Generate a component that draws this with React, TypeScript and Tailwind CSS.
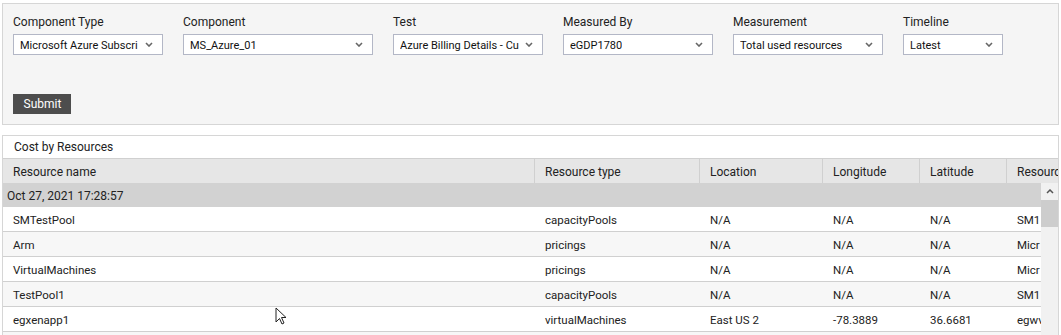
import React from "react";

const Chevron = () => (
  <svg width="8" height="5" viewBox="0 0 8 5" className="shrink-0">
    <polyline points="1,1 4,4 7,1" fill="none" stroke="#666" strokeWidth="1.6" />
  </svg>
);

const fields = [
  { label: "Component Type", value: "Microsoft Azure Subscri", w: "w-[150px]" },
  { label: "Component", value: "MS_Azure_01", w: "w-[190px]" },
  { label: "Test", value: "Azure Billing Details - Cu", w: "w-[150px]" },
  { label: "Measured By", value: "eGDP1780", w: "w-[150px]" },
  { label: "Measurement", value: "Total used resources", w: "w-[150px]" },
  { label: "Timeline", value: "Latest", w: "w-[100px]" },
];

const rows = [
  ["SMTestPool", "capacityPools", "N/A", "N/A", "N/A", "SM1"],
  ["Arm", "pricings", "N/A", "N/A", "N/A", "Micr"],
  ["VirtualMachines", "pricings", "N/A", "N/A", "N/A", "Micr"],
  ["TestPool1", "capacityPools", "N/A", "N/A", "N/A", "SM1"],
  ["egxenapp1", "virtualMachines", "East US 2", "-78.3889", "36.6681", "egwv"],
  ["", "", "", "", "", ""],
];

const headers = ["Resource name", "Resource type", "Location", "Longitude", "Latitude", "Resource"];

export default function App() {
  return (
    <div className="relative w-[1061px] h-[335px] overflow-hidden bg-white font-['Roboto',sans-serif] text-[12px] text-[#222]">
      {/* Filter panel */}
      <div className="mx-[2px] mt-[3px] h-[122px] border border-[#d6d6d6] bg-[#f5f5f5] px-[10px] pt-[10px]">
        <div className="flex gap-[20px]">
          {fields.map((f) => (
            <div key={f.label} className="flex flex-col">
              <div className="h-[16px] leading-[16px] text-[12px] text-[#222]">{f.label}</div>
              <div
                className={`${f.w} mt-[4px] flex h-[21px] items-center justify-between border border-[#b3b7c6] bg-white pl-[6px] pr-[9px] text-[11px] text-[#111]`}
              >
                <span className="overflow-hidden whitespace-nowrap pt-[2px] leading-[16px]">{f.value}</span>
                <Chevron />
              </div>
            </div>
          ))}
        </div>
        <button className="mt-[39px] h-[20px] w-[58px] bg-[#4d4d4d] pl-px text-[12px] leading-[20px] text-white">
          Submit
        </button>
      </div>

      {/* Table panel */}
      <div className="mx-[2px] mt-[10px] border border-[#d6d6d6] bg-white">
        <div className="h-[23px] border-b border-[#d0d0d0] pl-[11px] leading-[22px] text-[12px]">
          Cost by Resources
        </div>
        <div className="grid h-[24px] grid-cols-[532px_165px_123px_97px_87px_1fr] bg-[#e6e6e6] leading-[26px] text-[12px]">
          {headers.map((h, i) => (
            <div
              key={h}
              className={`overflow-hidden whitespace-nowrap pl-[10px] ${i < 5 ? "border-r border-[#d0d0d0]" : ""}`}
            >
              {h}
            </div>
          ))}
        </div>
        <div className="flex">
          <div className="min-w-0 flex-1 overflow-hidden">
            <div className="h-[24px] bg-[#d2d2d2] pl-[4px] leading-[26px] text-[12px]">
              Oct 27, 2021 17:28:57
            </div>
            {rows.map((r, ri) => (
              <div
                key={ri}
                className={`grid h-[25px] grid-cols-[532px_165px_123px_97px_87px_1fr] border-b border-[#d0d0d0] text-[11.5px] leading-[27px] ${
                  ri % 2 === 1 ? "bg-[#f7f7f7]" : "bg-white"
                }`}
              >
                {r.map((c, ci) => (
                  <div key={ci} className="overflow-hidden whitespace-nowrap pl-[10px]">
                    {c}
                  </div>
                ))}
              </div>
            ))}
          </div>
          <div className="flex w-[17px] shrink-0 flex-col bg-[#f1f1f1]">
            <div className="flex h-[17px] items-center justify-center">
              <svg width="8" height="5" viewBox="0 0 8 5">
                <polyline points="1,4 4,1 7,4" fill="none" stroke="#555" strokeWidth="1.5" />
              </svg>
            </div>
            <div className="h-[27px] bg-[#cdcdcd]" />
          </div>
        </div>
      </div>

      {/* mouse cursor */}
      <svg className="absolute left-[275px] top-[307px]" width="13" height="19" viewBox="0 0 13 19">
        <path d="M1 1 L1 15 L4.5 11.5 L7 17 L9 16 L6.5 10.5 L11 10.5 Z" fill="white" stroke="#222" strokeWidth="1" strokeLinejoin="round" />
      </svg>
    </div>
  );
}
